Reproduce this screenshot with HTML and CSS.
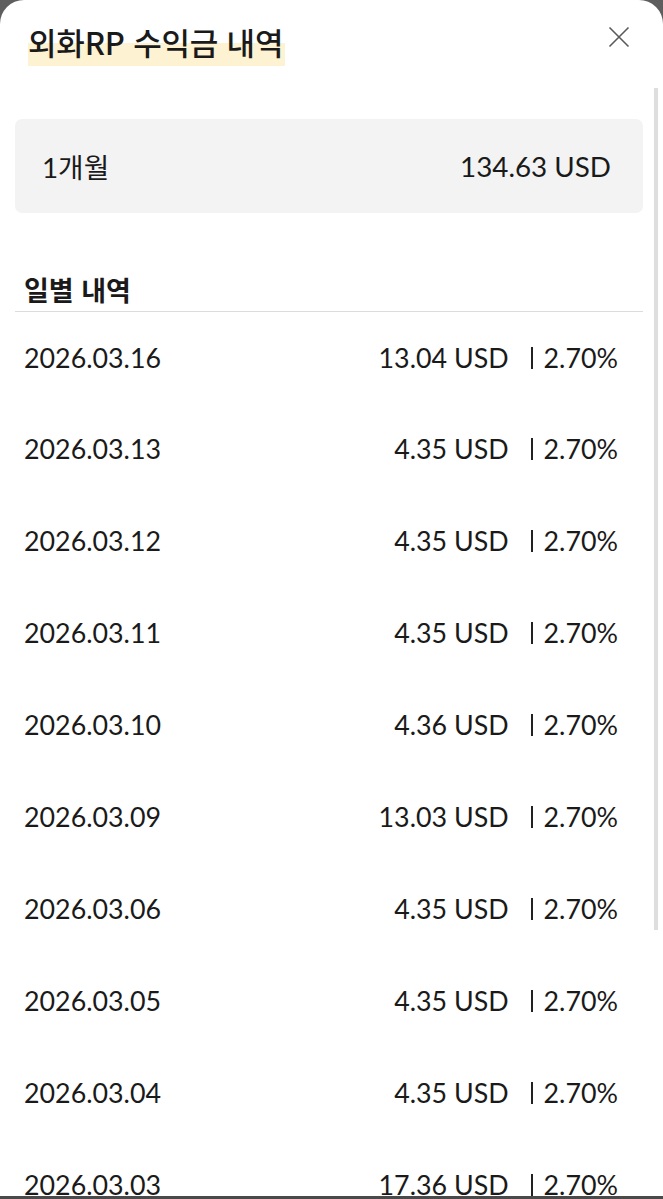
FILE: index.html
```html
<!DOCTYPE html>
<html lang="ko">
<head>
	<title>외화RP 수익금 내역</title>
	<meta http-equiv="Content-Type" content="text/html; charset=UTF-8">
	<meta name="viewport" content="width=device-width, initial-scale=1">
	<link rel="stylesheet" href="styles.css">
</head>
<body>
	<div class="sheet">
		<div class="head">
			<h1 class="title"><span class="mark">외화RP 수익금 내역</span></h1>
			<button class="close" aria-label="닫기">
				<svg width="22" height="22" viewBox="0 0 22 22">
					<path d="M1.5 1.5 L20.5 20.5 M20.5 1.5 L1.5 20.5" stroke="#5a5a5a" stroke-width="1.6" fill="none"/>
				</svg>
			</button>
		</div>
		<div class="summary">
			<span>1개월</span>
			<span>134.63 USD</span>
		</div>
		<h2 class="sub">일별 내역</h2>
		<ul class="list">
			<li><span class="date">2026.03.16</span><span class="amt">13.04 USD</span><span class="rate">2.70%</span></li>
			<li><span class="date">2026.03.13</span><span class="amt">4.35 USD</span><span class="rate">2.70%</span></li>
			<li><span class="date">2026.03.12</span><span class="amt">4.35 USD</span><span class="rate">2.70%</span></li>
			<li><span class="date">2026.03.11</span><span class="amt">4.35 USD</span><span class="rate">2.70%</span></li>
			<li><span class="date">2026.03.10</span><span class="amt">4.36 USD</span><span class="rate">2.70%</span></li>
			<li><span class="date">2026.03.09</span><span class="amt">13.03 USD</span><span class="rate">2.70%</span></li>
			<li><span class="date">2026.03.06</span><span class="amt">4.35 USD</span><span class="rate">2.70%</span></li>
			<li><span class="date">2026.03.05</span><span class="amt">4.35 USD</span><span class="rate">2.70%</span></li>
			<li><span class="date">2026.03.04</span><span class="amt">4.35 USD</span><span class="rate">2.70%</span></li>
			<li><span class="date">2026.03.03</span><span class="amt">17.36 USD</span><span class="rate">2.70%</span></li>
		</ul>
		<div class="thumb"></div>
		<div class="edge"></div>
	</div>
</body>
</html>
```

FILE: styles.css
```css
html, body {
	margin: 0;
	height: 100%;
}
body {
	background: #5e5e5e;
	font-family: Lato, "Noto Sans CJK KR", sans-serif;
	color: #1a1a1a;
}
.sheet {
	position: relative;
	height: 1199px;
	overflow: hidden;
	background: #fff;
	border-radius: 24px 24px 0 0;
}
.head {
	display: flex;
	justify-content: space-between;
	align-items: flex-start;
	padding: 20px 33px 0 28px;
	height: 97px;
	box-sizing: border-box;
}
.title {
	margin: 0;
	font-family: "Noto Sans CJK KR", sans-serif;
	font-size: 31px;
	font-weight: 500;
	line-height: 44px;
	letter-spacing: -0.2px;
}
.mark {
	background: linear-gradient(transparent 52%, #fdf2d2 52%);
	padding: 0 2px 2px 0;
}
.close {
	border: none;
	background: none;
	padding: 0;
	margin-top: 6px;
	cursor: pointer;
}
.summary {
	display: flex;
	justify-content: space-between;
	align-items: center;
	margin: 22px 20px 0 15px;
	height: 94px;
	padding: 0 32px 0 27px;
	background: #f3f3f3;
	border-radius: 7px;
	font-size: 27.8px;
}
.sub {
	margin: 0 20px 0 15px;
	padding: 61px 0 5px 9px;
	font-family: "Noto Sans CJK KR", sans-serif;
	font-size: 27px;
	font-weight: 700;
	line-height: 32px;
	border-bottom: 1px solid #dcdcdc;
}
.list {
	list-style: none;
	margin: 0 20px 0 15px;
	padding: 0;
}
.list li {
	display: flex;
	align-items: center;
	height: 92px;
	padding: 0 25px 0 9px;
	font-size: 26.8px;
}
.list li:first-child {
	height: 91px;
}
.date {
	flex: 1;
}
.amt {
	margin-right: 22px;
}
.rate {
	border-left: 2px solid #222;
	padding-left: 11px;
	line-height: 22px;
}
.thumb {
	position: absolute;
	right: 5px;
	top: 88px;
	width: 4px;
	height: 842px;
	background: #dedede;
}
.edge {
	position: absolute;
	left: 0;
	right: 0;
	bottom: 0;
	height: 3px;
	background: #4a4a4a;
}
```
